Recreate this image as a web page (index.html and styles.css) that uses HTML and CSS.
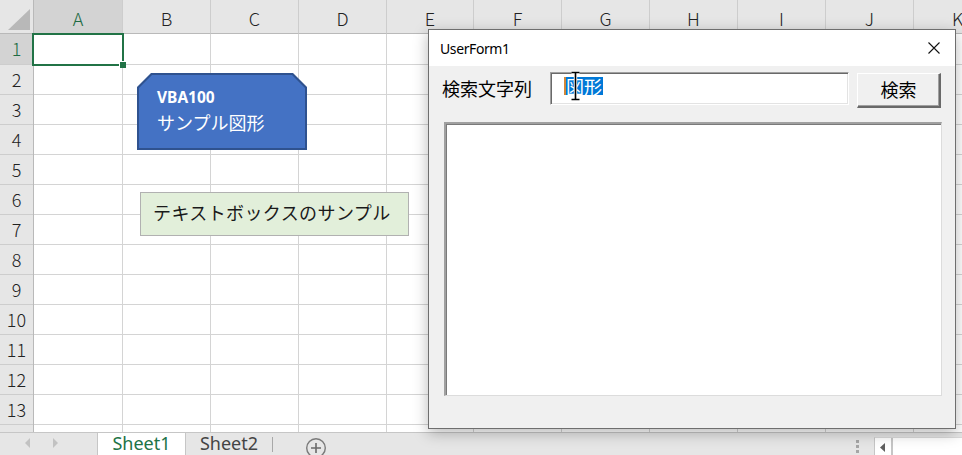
FILE: index.html
```html
<!DOCTYPE html>
<html lang="ja">
<head>
<meta charset="utf-8">
<title>Excel UserForm</title>
<link rel="stylesheet" href="styles.css">
</head>
<body>
<div class="app">
  <div class="colheads">
    <div class="corner"><span class="tri"></span></div>
    <div class="ch w89 sel">A</div>
    <div class="ch">B</div>
    <div class="ch">C</div>
    <div class="ch">D</div>
    <div class="ch w87">E</div>
    <div class="ch">F</div>
    <div class="ch">G</div>
    <div class="ch">H</div>
    <div class="ch">I</div>
    <div class="ch">J</div>
    <div class="ch">K</div>
  </div>
  <div class="main">
    <div class="rowheads">
      <div class="rh first sel">1</div>
      <div class="rh">2</div>
      <div class="rh">3</div>
      <div class="rh">4</div>
      <div class="rh">5</div>
      <div class="rh">6</div>
      <div class="rh">7</div>
      <div class="rh">8</div>
      <div class="rh">9</div>
      <div class="rh">10</div>
      <div class="rh">11</div>
      <div class="rh">12</div>
      <div class="rh">13</div>
      <div class="rh part"></div>
    </div>
    <div class="cells">
      <div class="col w89"></div>
      <div class="col"></div>
      <div class="col"></div>
      <div class="col"></div>
      <div class="col w87"></div>
      <div class="col"></div>
      <div class="col"></div>
      <div class="col"></div>
      <div class="col"></div>
      <div class="col"></div>
      <div class="col"></div>
      <div class="selcell"><span class="handle"></span></div>
      <div class="shape">
        <div class="shape-in">
          <div class="shape-l1">VBA100</div>
          <div class="shape-l2">サンプル図形</div>
        </div>
      </div>
      <div class="tbox">テキストボックスのサンプル</div>
    </div>
  </div>
  <div class="tabbar">
    <div class="nav">
      <span class="arr-l"></span>
      <span class="arr-r"></span>
    </div>
    <div class="tab tab1">Sheet1</div>
    <div class="tab tab2">Sheet2</div>
    <span class="tsep"></span>
    <svg class="plus" width="22" height="22" viewBox="0 0 22 22">
      <circle cx="11" cy="11" r="9.3" fill="none" stroke="#7a7a7a" stroke-width="1.4"/>
      <path d="M11 6v10M6 11h10" stroke="#6a6a6a" stroke-width="1.6"/>
    </svg>
    <div class="hright">
      <div class="dots"><span></span><span></span><span></span></div>
      <div class="hscroll">
        <div class="hs-btn"><span class="hs-arr"></span></div>
        <div class="hs-track"></div>
      </div>
    </div>
  </div>

  <div class="form">
    <div class="titlebar">
      <span class="title">UserForm1</span>
      <svg class="close" width="12" height="12" viewBox="0 0 12 12">
        <path d="M0.5 0.5L11.5 11.5M11.5 0.5L0.5 11.5" stroke="#111" stroke-width="1.1"/>
      </svg>
    </div>
    <div class="fbody">
      <div class="frow">
        <div class="flabel">検索文字列</div>
        <div class="ftext">
          <span class="fsel">図形</span>
          <svg class="ibeam" width="11" height="30" viewBox="0 0 11 30">
            <path d="M1.5 1.5h8M5.5 1.5v27M1.5 28.5h8" stroke="#fff" stroke-width="3.4"/>
            <path d="M1.5 1.5h8M5.5 1.5v27M1.5 28.5h8" stroke="#000" stroke-width="1.6"/>
          </svg>
        </div>
        <div class="fbtn">検索</div>
      </div>
      <div class="flist"></div>
    </div>
  </div>
</div>
</body>
</html>
```

FILE: styles.css
```css
* { box-sizing: border-box; }
html, body { margin: 0; padding: 0; background: #ffffff; }
body { width: 962px; height: 455px; overflow: hidden; }

.app {
  position: relative;
  width: 962px;
  height: 455px;
  overflow: hidden;
  font-family: "Noto Sans", "Noto Sans CJK JP", sans-serif;
  background: #ffffff;
}

/* ---------- column headers ---------- */
.colheads {
  display: flex;
  height: 34px;
  background: #e6e6e6;
}
.corner {
  flex: none;
  width: 34px;
  height: 34px;
  border-right: 1px solid #b9b9b9;
  border-bottom: 1px solid #b9b9b9;
  display: flex;
  justify-content: flex-end;
  align-items: flex-end;
  padding: 0 3px 3px 0;
}
.tri {
  width: 22px;
  height: 21px;
  background: #b8b8b8;
  clip-path: polygon(100% 0, 100% 100%, 0 100%);
}
.ch {
  flex: none;
  width: 88px;
  height: 34px;
  border-right: 1px solid #cdcdcd;
  border-bottom: 1px solid #b9b9b9;
  font-family: "Noto Sans CJK JP", "Noto Sans", sans-serif;
  font-weight: 300;
  font-size: 18px;
  color: #222;
  text-align: center;
  line-height: 20px;
  padding-top: 8px;
}
.ch.w89 { width: 89px; }
.ch.w87 { width: 87px; }
.ch.sel { background: #d3d3d3; color: #1e6b43; }

/* ---------- body ---------- */
.main {
  display: flex;
  height: 398px;
}
.rowheads {
  flex: none;
  width: 34px;
  height: 398px;
  background: #e6e6e6;
  border-right: 1px solid #b9b9b9;
  overflow: hidden;
}
.rh {
  height: 30px;
  border-bottom: 1px solid #cdcdcd;
  font-family: "Noto Sans CJK JP", "Noto Sans", sans-serif;
  font-weight: 300;
  font-size: 18px;
  color: #222;
  display: flex;
  align-items: center;
  justify-content: center;
  padding-bottom: 2px;
}
.rh.first { height: 31px; }
.rh.sel { background: #d3d3d3; color: #1e6b43; }
.rh.part { height: 8px; border-bottom: none; }

.cells {
  position: relative;
  flex: 1;
  min-width: 0;
  display: flex;
  height: 398px;
  background:
    linear-gradient(#fff, #fff) 0 0 / 100% 1px no-repeat,
    repeating-linear-gradient(to bottom, transparent 0 29px, #d4d4d4 29px 30px) 0 1px / 100% 30px;
}
.col {
  flex: none;
  width: 88px;
  height: 100%;
  border-right: 1px solid #d4d4d4;
}
.col.w89 { width: 89px; }
.col.w87 { width: 87px; }

.selcell {
  position: absolute;
  left: -2px;
  top: -1px;
  width: 92px;
  height: 33px;
  border: 2px solid #217346;
}
.handle {
  position: absolute;
  right: -4px;
  bottom: -4px;
  width: 7px;
  height: 7px;
  background: #217346;
  border: 1px solid #fff;
  border-right: none;
  border-bottom: none;
}

.shape {
  position: absolute;
  left: 103px;
  top: 39px;
  width: 170px;
  height: 77px;
  padding: 2px;
  background: #2f528f;
  clip-path: polygon(14px 0, calc(100% - 14px) 0, 100% 14px, 100% 100%, 0 100%, 0 14px);
}
.shape-in {
  height: 100%;
  background: #4472c4;
  clip-path: polygon(13px 0, calc(100% - 13px) 0, 100% 13px, 100% 100%, 0 100%, 0 13px);
  padding: 12px 0 0 18px;
  color: #ffffff;
}
.shape-l1 {
  font-family: "Noto Sans", sans-serif;
  font-weight: 700;
  font-size: 15.5px;
  line-height: 20px;
}
.shape-l2 {
  font-family: "Noto Sans CJK JP", sans-serif;
  font-size: 18px;
  line-height: 24px;
  margin-top: 3px;
}

.tbox {
  position: absolute;
  left: 106px;
  top: 158px;
  width: 269px;
  height: 44px;
  background: #e2efda;
  border: 1px solid #b1b1b1;
  font-family: "Noto Sans CJK JP", sans-serif;
  font-size: 18px;
  letter-spacing: 0.4px;
  color: #1a1a1a;
  display: flex;
  align-items: center;
  padding: 0 0 4px 12px;
  white-space: nowrap;
}

/* ---------- sheet tabs ---------- */
.tabbar {
  display: flex;
  height: 23px;
  background: #e6e6e6;
  border-top: 1px solid #c6c6c6;
}
.nav {
  flex: none;
  width: 97px;
  display: flex;
  align-items: center;
  padding: 0 0 2px 25px;
  gap: 23px;
}
.arr-l, .arr-r {
  width: 5px;
  height: 10px;
  background: #c2c2c2;
}
.arr-l { clip-path: polygon(100% 0, 100% 100%, 0 50%); }
.arr-r { clip-path: polygon(0 0, 0 100%, 100% 50%); }
.tab {
  flex: none;
  height: 22px;
  font-size: 18px;
  line-height: 21px;
  text-align: center;
}
.tab1 {
  width: 89px;
  background: #ffffff;
  color: #217346;
  border-left: 1px solid #c6c6c6;
  border-right: 1px solid #c6c6c6;
}
.tab2 {
  width: 86px;
  color: #444;
}
.tsep {
  flex: none;
  width: 1px;
  height: 15px;
  margin-top: 4px;
  background: #a8a8a8;
}
.plus {
  flex: none;
  margin: 4px 0 0 32px;
}
.hright {
  margin-left: auto;
  display: flex;
  gap: 15px;
}
.dots {
  width: 3px;
  display: flex;
  flex-direction: column;
  gap: 2px;
  padding-top: 7px;
}
.dots span {
  width: 3px;
  height: 3px;
  background: #a6a6a6;
}
.hscroll {
  width: 88px;
  margin-top: 4px;
  height: 20px;
  display: flex;
  background: #ffffff;
  border-left: 1px solid #c6c6c6;
  border-top: 1px solid #dadada;
}
.hs-btn {
  width: 18px;
  display: flex;
  align-items: center;
  padding: 0 0 0 5px;
  border-right: 2px solid #c6c6c6;
}
.hs-arr {
  width: 5px;
  height: 9px;
  background: #5f5f5f;
  clip-path: polygon(100% 0, 100% 100%, 0 50%);
}
.hs-track { flex: 1; }

/* ---------- UserForm window ---------- */
.form {
  position: absolute;
  left: 428px;
  top: 29px;
  width: 528px;
  height: 400px;
  border: 1px solid #6e6e6e;
  background: #f0f0f0;
  display: flex;
  flex-direction: column;
  box-shadow: 0 4px 14px rgba(0, 0, 0, 0.28);
}
.titlebar {
  flex: none;
  height: 36px;
  background: #ffffff;
  display: flex;
  align-items: center;
  justify-content: space-between;
  padding: 0 15px 0 11px;
}
.title {
  font-family: "Noto Sans", sans-serif;
  font-size: 14px;
  letter-spacing: -0.4px;
  color: #000;
}
.fbody {
  flex: 1;
  padding-top: 6px;
}
.frow {
  display: flex;
  align-items: flex-start;
  padding-left: 13px;
}
.flabel {
  flex: none;
  width: 108px;
  height: 33px;
  display: flex;
  align-items: center;
  font-family: "Noto Sans CJK JP", sans-serif;
  font-size: 18px;
  color: #000;
  padding-bottom: 2px;
}
.ftext {
  position: relative;
  flex: none;
  width: 299px;
  height: 33px;
  background: #ffffff;
  border-top: 1px solid #a0a0a0;
  border-left: 1px solid #a0a0a0;
  border-bottom: 1px solid #ffffff;
  border-right: 1px solid #ffffff;
  box-shadow: inset 1px 1px 0 #696969, inset -1px -1px 0 #e3e3e3;
  padding: 4px 0 0 13px;
}
.fsel {
  display: inline-block;
  height: 18px;
  line-height: 18px;
  font-family: "Noto Sans CJK JP", sans-serif;
  font-size: 18px;
  color: #ffffff;
  background: #0078d7;
  border-left: 2px solid #d2873a;
  padding-right: 1px;
  vertical-align: top;
}
.ibeam {
  position: absolute;
  left: 19px;
  top: -2px;
}
.fbtn {
  flex: none;
  width: 84px;
  height: 35px;
  margin: 1px 0 0 8px;
  background: #f0f0f0;
  border-top: 1px solid #ffffff;
  border-left: 1px solid #ffffff;
  border-right: 2px solid #696969;
  border-bottom: 2px solid #696969;
  box-shadow: inset -1px -1px 0 #a0a0a0;
  display: flex;
  align-items: center;
  justify-content: center;
  font-family: "Noto Sans CJK JP", sans-serif;
  font-size: 18px;
  color: #000;
  padding-bottom: 2px;
}
.flist {
  width: 498px;
  height: 274px;
  margin: 14px 0 0 15px;
  background: #ffffff;
  border-top: 2px solid #a0a0a0;
  border-left: 2px solid #a0a0a0;
  border-bottom: 1px solid #dcdcdc;
  border-right: 1px solid #dcdcdc;
  box-shadow: inset 1px 1px 0 #7a7a7a;
}
```
